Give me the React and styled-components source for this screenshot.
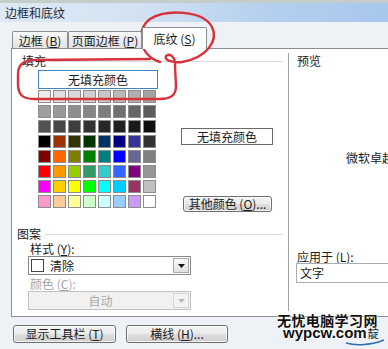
import React from 'react';
import styled, { createGlobalStyle } from 'styled-components';

const GlobalStyle = createGlobalStyle`
  html, body { margin: 0; padding: 0; background: #eef1f5; }
  body {
    font-family: "Noto Sans CJK SC", "Noto Sans", sans-serif;
    font-size: 12px;
    color: #1b1b1b;
  }
  * { box-sizing: border-box; }
`;

const Window = styled.div`
  position: relative;
  width: 388px;
  height: 349px;
  overflow: hidden;
  background: #eef1f5;
  display: flex;
  flex-direction: column;
`;

const TitleBar = styled.div`
  flex: none;
  height: 22px;
  border-top: 3px solid #c5cdcb;
  background: linear-gradient(to right, #dfe9f4 0%, #d3e2f2 35%, #b4cfee 70%, #a7c7ec 100%);
  display: flex;
  align-items: center;
  padding-left: 5px;
  color: #1e2a3a;
  font-size: 12px;
`;

const Body = styled.div`
  flex: none;
  padding-left: 11px;
`;

const TabStrip = styled.div`
  height: 26px;
  display: flex;
  align-items: flex-end;
  padding-left: 1px;
  position: relative;
  z-index: 1;
`;

const Tab = styled.div`
  width: ${p => p.$w}px;
  height: ${p => (p.$active ? 22 : 17)}px;
  margin-bottom: ${p => (p.$active ? -1 : 0)}px;
  border: 1px solid #8c8e94;
  border-bottom: none;
  border-radius: 2px 2px 0 0;
  background: ${p => (p.$active ? '#ffffff' : 'linear-gradient(#f8f8f8, #ececec 50%, #e3e3e3)')};
  display: flex;
  align-items: center;
  justify-content: center;
  padding-top: ${p => (p.$active ? 0 : 1)}px;
  white-space: nowrap;
  font-size: 12px;
  line-height: 12px;
`;

const Key = styled.span`
  text-decoration: underline;
`;

const Panel = styled.div`
  height: 269px;
  background: #fff;
  border: 1px solid #8c8e94;
  border-right: none;
  display: flex;
`;

const LeftPane = styled.div`
  width: 276px;
  flex: none;
  display: flex;
  flex-direction: column;
`;

const Divider = styled.div`
  width: 1px;
  flex: none;
  margin: 4px 0 5px;
  background: #a3a3a3;
`;

const RightPane = styled.div`
  flex: 1;
  padding-left: 8px;
  display: flex;
  flex-direction: column;
  min-width: 0;
`;

const GroupHeader = styled.div`
  display: flex;
  align-items: center;
  height: 14px;
  margin-top: ${p => p.$mt}px;
  padding-left: ${p => p.$pl}px;
  padding-right: 5px;
  line-height: 14px;
  &::after {
    content: '';
    flex: 1;
    height: 1px;
    margin-left: 4px;
    background: #d6dde3;
  }
`;

const FillRow = styled.div`
  display: flex;
  margin-top: 2px;
  padding-left: 26px;
`;

const ColorColumn = styled.div`
  width: 120px;
  display: flex;
  flex-direction: column;
`;

const NoFillButton = styled.div`
  height: 19px;
  border: 1px solid #3d84c6;
  background: #fff;
  display: flex;
  align-items: center;
  justify-content: center;
  line-height: 12px;
`;

const ColorGrid = styled.div`
  margin-top: 1px;
  display: grid;
  grid-template-columns: repeat(8, 13px);
  grid-auto-rows: 13px;
  gap: 2px;
`;

const Swatch = styled.div`
  border: 1px solid #8d8d8d;
  background: ${p => p.$c};
`;

const SideColumn = styled.div`
  margin-left: 23px;
  display: flex;
  flex-direction: column;
  align-items: flex-start;
`;

const FlatButton = styled.div`
  margin-top: 58px;
  width: 92px;
  height: 17px;
  border: 1px solid #6a6a6a;
  background: #fff;
  display: flex;
  align-items: center;
  justify-content: center;
  line-height: 12px;
`;

const PushButton = styled.div`
  margin-top: ${p => p.$mt || 0}px;
  margin-left: ${p => p.$ml || 0}px;
  width: ${p => p.$w}px;
  height: ${p => p.$h}px;
  border: 1px solid #707070;
  border-radius: 3px;
  background: linear-gradient(#f3f3f3 0%, #ebebeb 48%, #dedede 52%, #cfcfcf 100%);
  box-shadow: inset 0 0 0 1px rgba(255, 255, 255, 0.7);
  display: flex;
  align-items: center;
  justify-content: center;
  line-height: 12px;
  white-space: nowrap;
`;

const FieldLabel = styled.div`
  margin-top: ${p => p.$mt}px;
  padding-left: ${p => p.$pl}px;
  height: ${p => p.$h || 14}px;
  line-height: ${p => p.$h || 14}px;
  color: ${p => (p.$disabled ? '#a4a4a4' : '#1b1b1b')};
`;

const Select = styled.div`
  margin-left: 16px;
  width: 163px;
  height: 19px;
  border: 1px solid ${p => (p.$disabled ? '#c2c2c2' : '#8b8b8b')};
  background: ${p => (p.$disabled ? '#f1f1f1' : '#fff')};
  display: flex;
  align-items: stretch;
  color: ${p => (p.$disabled ? '#a8a8a8' : '#1b1b1b')};
`;

const SelectValue = styled.div`
  flex: 1;
  display: flex;
  align-items: center;
  justify-content: ${p => (p.$center ? 'center' : 'flex-start')};
  padding-left: ${p => (p.$center ? 0 : 2)}px;
  gap: 6px;
  line-height: 12px;
`;

const PatternBox = styled.span`
  width: 13px;
  height: 13px;
  border: 1px solid #444;
  background: #fff;
`;

const DropButton = styled.div`
  width: 16px;
  margin: 1px;
  border: 1px solid ${p => (p.$disabled ? '#d4d4d4' : '#a9a9a9')};
  background: ${p => (p.$disabled ? '#f3f3f3' : 'linear-gradient(#fafafa, #e2e2e2)')};
  display: flex;
  align-items: center;
  justify-content: center;
`;

const PreviewArea = styled.div`
  height: 183px;
  display: flex;
  align-items: center;
  padding-left: 49px;
  padding-bottom: 4px;
  white-space: nowrap;
  overflow: hidden;
`;

const ApplyInput = styled.div`
  margin-left: -1px;
  width: 120px;
  height: 20px;
  border: 1px solid #a8adb5;
  display: flex;
  align-items: center;
  padding-left: 3px;
  line-height: 12px;
`;

const Footer = styled.div`
  flex: none;
  display: flex;
  gap: 10px;
  padding: 8px 0 0 13px;
`;

const Overlay = styled.svg`
  position: absolute;
  left: 0;
  top: 0;
  pointer-events: none;
`;

const Watermark = styled.div`
  position: absolute;
  left: 275px;
  top: 313px;
  display: flex;
  flex-direction: column;
  text-shadow: 0 0 2px #fff, 0 0 2px #fff, 0 0 3px #fff;
`;

const WmTitle = styled.div`
  height: 14px;
  line-height: 14px;
  font-family: "Noto Sans CJK SC", sans-serif;
  font-weight: 700;
  font-size: 14px;
  letter-spacing: 0.4px;
  color: #111;
  padding-left: 2px;
`;

const WmUrl = styled.div`
  height: 12px;
  display: flex;
  align-items: baseline;
  padding-left: 8px;
  font-family: "Liberation Sans", Arial, sans-serif;
  font-weight: 700;
  font-size: 15px;
  line-height: 12px;
  color: #111;
  & > small {
    font-family: "Noto Sans CJK SC", sans-serif;
    font-weight: 400;
    font-size: 11px;
    margin-left: 1px;
  }
`;

const palette = [
  ['#ebebeb', '#e0e0e0', '#d8d8d8', '#d0d0d0', '#c6c6c6', '#bababa', '#afafaf', '#a4a4a4'],
  ['#9f9f9f', '#999999', '#8f8f8f', '#868686', '#7d7d7d', '#707070', '#666666', '#5c5c5c'],
  ['#525252', '#474747', '#3d3d3d', '#333333', '#262626', '#202020', '#1a1a1a', '#0f0f0f'],
  ['#000000', '#993300', '#333300', '#003300', '#003366', '#000080', '#333399', '#333333'],
  ['#800000', '#ff6600', '#808000', '#008000', '#008080', '#0000ff', '#666699', '#808080'],
  ['#ff0000', '#ff9900', '#99cc00', '#339966', '#33cccc', '#3366ff', '#800080', '#969696'],
  ['#ff00ff', '#ffcc00', '#ffff00', '#00ff00', '#00ffff', '#00ccff', '#993366', '#c0c0c0'],
  ['#ff99cc', '#ffcc99', '#ffff99', '#ccffcc', '#ccffff', '#99ccff', '#cc99ff', '#ffffff'],
];

const Arrow = ({ disabled }) => (
  <svg width="7" height="4" viewBox="0 0 7 4">
    <polygon points="0,0 7,0 3.5,4" fill={disabled ? '#b8b8b8' : '#111'} />
  </svg>
);

export default function App() {
  return (
    <Window>
      <GlobalStyle />
      <TitleBar>边框和底纹</TitleBar>
      <Body>
        <TabStrip>
          <Tab $w={56}>边框 (<Key>B</Key>)</Tab>
          <Tab $w={74}>页面边框 (<Key>P</Key>)</Tab>
          <Tab $w={65} $active>底纹 (<Key>S</Key>)</Tab>
        </TabStrip>
        <Panel>
          <LeftPane>
            <GroupHeader $mt={5} $pl={10}>填充</GroupHeader>
            <FillRow>
              <ColorColumn>
                <NoFillButton>无填充颜色</NoFillButton>
                <ColorGrid>
                  {palette.flat().map((c, i) => (
                    <Swatch key={i} $c={c} />
                  ))}
                </ColorGrid>
              </ColorColumn>
              <SideColumn>
                <FlatButton>无填充颜色</FlatButton>
                <PushButton $mt={51} $ml={2} $w={89} $h={16}>
                  其他颜色 (<Key>O</Key>)...
                </PushButton>
              </SideColumn>
            </FillRow>
            <GroupHeader $mt={15} $pl={5}>图案</GroupHeader>
            <FieldLabel $mt={1} $pl={18}>样式 (<Key>Y</Key>):</FieldLabel>
            <Select>
              <SelectValue>
                <PatternBox />
                清除
              </SelectValue>
              <DropButton><Arrow /></DropButton>
            </Select>
            <FieldLabel $mt={2} $pl={18} $disabled>颜色 (<Key>C</Key>):</FieldLabel>
            <Select $disabled>
              <SelectValue $center>自动</SelectValue>
              <DropButton $disabled><Arrow disabled /></DropButton>
            </Select>
          </LeftPane>
          <Divider />
          <RightPane>
            <FieldLabel $mt={5} $pl={0}>预览</FieldLabel>
            <PreviewArea>微软卓越</PreviewArea>
            <FieldLabel $mt={0} $pl={0} $h={12}>应用于 (<Key>L</Key>):</FieldLabel>
            <ApplyInput>文字</ApplyInput>
          </RightPane>
        </Panel>
      </Body>
      <Footer>
        <PushButton $w={103} $h={18}>显示工具栏 (<Key>T</Key>)</PushButton>
        <PushButton $w={102} $h={18}>横线 (<Key>H</Key>)...</PushButton>
      </Footer>
      <Overlay width="388" height="349" viewBox="0 0 388 349">
        <g fill="none" stroke="#d7323c" strokeWidth="2.4" strokeLinecap="round">
          <path d="M160 62 C 139 56, 135 30, 150 19 C 166 9, 203 10, 212 27 C 219 41, 206 58, 182 62 C 172 63, 164 60, 166 56 C 170 52, 176 58, 175 66" />
          <path d="M175 66 L 176 86 C 176 96, 170 99, 160 99 L 34 99 C 22 99, 18 94, 18 84 L 18 74 C 18 64, 24 60, 36 60 L 150 59" />
        </g>
        <path d="M346 343 C 356 346, 372 345, 384 340" fill="none" stroke="#2f6fb5" strokeWidth="1.5" />
      </Overlay>
      <Watermark>
        <WmTitle>无忧电脑学习网</WmTitle>
        <WmUrl>wypcw.com<small>靛</small></WmUrl>
      </Watermark>
    </Window>
  );
}
